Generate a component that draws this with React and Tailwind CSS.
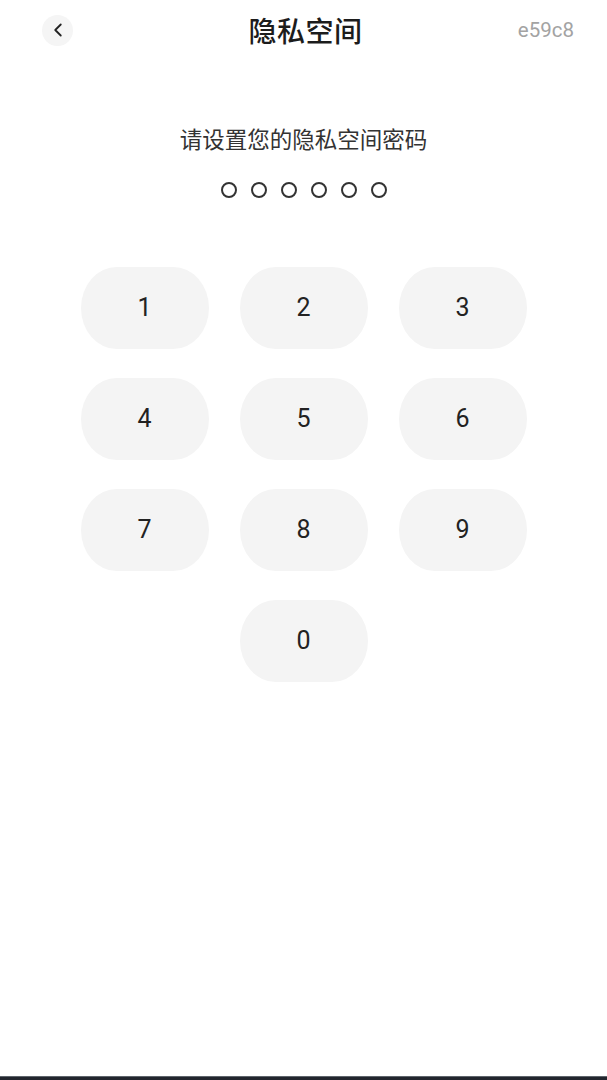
import { ChevronLeft } from "lucide-react";

const KEYS = ["1", "2", "3", "4", "5", "6", "7", "8", "9"];

export default function App() {
  return (
    <div className="h-[1080px] w-full bg-white flex flex-col font-['Noto_Sans_CJK_SC',sans-serif]">
      {/* Header */}
      <header className="h-[60px] flex items-center justify-between pl-[42px] pr-[33px]">
        <button className="w-[31px] h-[31px] rounded-full bg-[#f5f5f5] flex items-center justify-center">
          <ChevronLeft size={22} strokeWidth={2} className="text-[#222]" />
        </button>
        <h1 className="text-[28px] font-medium text-[#1c1c1c] tracking-[0.5px] ml-[20px]">隐私空间</h1>
        <span className="text-[20.5px] text-[#a3a3a3] font-['Roboto',sans-serif]">e59c8</span>
      </header>

      {/* Prompt */}
      <p className="mt-[60px] text-center text-[22.5px] text-[#333] leading-[36px]">请设置您的隐私空间密码</p>

      {/* Dots */}
      <div className="mt-[26px] flex justify-center gap-[14px]">
        {Array.from({ length: 6 }).map((_, i) => (
          <span key={i} className="w-[16px] h-[16px] rounded-full border-2 border-[#333]" />
        ))}
      </div>

      {/* Keypad */}
      <div className="mt-[69px] grid grid-cols-[128px_128px_128px] gap-x-[31px] gap-y-[29px] justify-center font-['Roboto',sans-serif]">
        {KEYS.map((k) => (
          <button key={k} className="h-[82px] rounded-[28%_/_50%] bg-[#f4f4f4] text-[25px] text-[#222] flex items-center justify-center">
            {k}
          </button>
        ))}
        <button className="col-start-2 h-[82px] rounded-[28%_/_50%] bg-[#f4f4f4] text-[25px] text-[#222] flex items-center justify-center">
          0
        </button>
      </div>

      <div className="mt-auto h-[4px] border-t border-[#5e646b] bg-[#22252d]" />
    </div>
  );
}
